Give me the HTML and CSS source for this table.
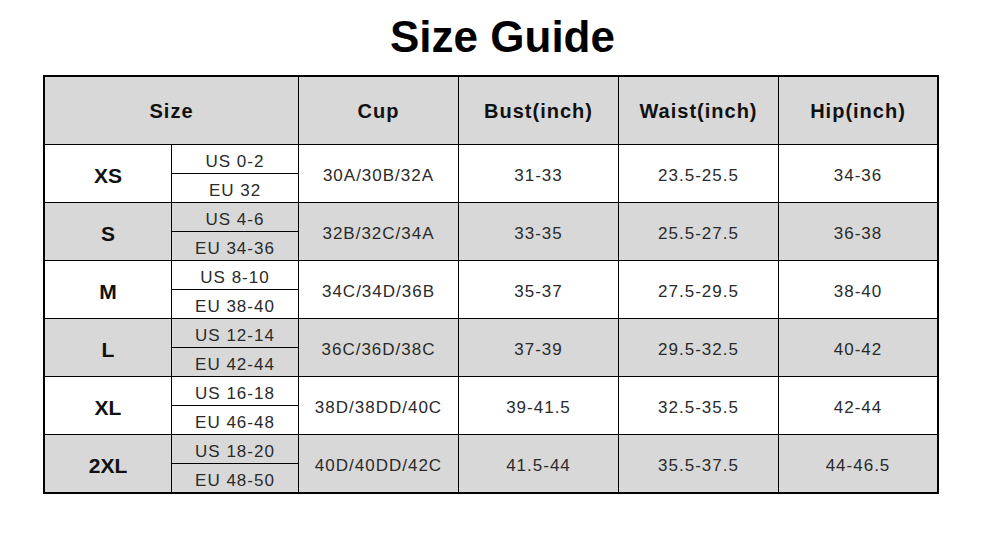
FILE: index.html
```html
<!DOCTYPE html>
<html>
<head>
<meta charset="utf-8">
<link rel="stylesheet" href="styles.css">
</head>
<body>
<div class="page">
  <h1 class="title">Size Guide</h1>
  <div class="frame">
    <div class="grid">
      <div class="cell head span-size">Size</div>
      <div class="cell head">Cup</div>
      <div class="cell head">Bust(inch)</div>
      <div class="cell head">Waist(inch)</div>
      <div class="cell head">Hip(inch)</div>

      <div class="cell size r2">XS</div>
      <div class="cell sub">US 0-2</div>
      <div class="cell data r2">30A/30B/32A</div>
      <div class="cell data r2">31-33</div>
      <div class="cell data r2">23.5-25.5</div>
      <div class="cell data r2">34-36</div>
      <div class="cell sub">EU 32</div>

      <div class="cell size r2 gray">S</div>
      <div class="cell sub gray">US 4-6</div>
      <div class="cell data r2 gray">32B/32C/34A</div>
      <div class="cell data r2 gray">33-35</div>
      <div class="cell data r2 gray">25.5-27.5</div>
      <div class="cell data r2 gray">36-38</div>
      <div class="cell sub gray">EU 34-36</div>

      <div class="cell size r2">M</div>
      <div class="cell sub">US 8-10</div>
      <div class="cell data r2">34C/34D/36B</div>
      <div class="cell data r2">35-37</div>
      <div class="cell data r2">27.5-29.5</div>
      <div class="cell data r2">38-40</div>
      <div class="cell sub">EU 38-40</div>

      <div class="cell size r2 gray">L</div>
      <div class="cell sub gray">US 12-14</div>
      <div class="cell data r2 gray">36C/36D/38C</div>
      <div class="cell data r2 gray">37-39</div>
      <div class="cell data r2 gray">29.5-32.5</div>
      <div class="cell data r2 gray">40-42</div>
      <div class="cell sub gray">EU 42-44</div>

      <div class="cell size r2">XL</div>
      <div class="cell sub">US 16-18</div>
      <div class="cell data r2">38D/38DD/40C</div>
      <div class="cell data r2">39-41.5</div>
      <div class="cell data r2">32.5-35.5</div>
      <div class="cell data r2">42-44</div>
      <div class="cell sub">EU 46-48</div>

      <div class="cell size r2 gray">2XL</div>
      <div class="cell sub gray">US 18-20</div>
      <div class="cell data r2 gray">40D/40DD/42C</div>
      <div class="cell data r2 gray">41.5-44</div>
      <div class="cell data r2 gray">35.5-37.5</div>
      <div class="cell data r2 gray">44-46.5</div>
      <div class="cell sub gray">EU 48-50</div>
    </div>
  </div>
</div>
</body>
</html>
```
FILE: styles.css
```css
html, body {
  margin: 0;
  padding: 0;
  background: #ffffff;
}
body {
  font-family: "Liberation Sans", Arial, sans-serif;
  color: #111;
}
.page {
  width: 1000px;
  height: 550px;
  padding-top: 12px;
  box-sizing: border-box;
}
.title {
  margin: 0 0 13px 0;
  padding-left: 5px;
  text-align: center;
  font-size: 44px;
  line-height: 50px;
  font-weight: bold;
  color: #000;
}
.frame {
  margin-left: 43px;
  width: 896px;
  border: 2px solid #000;
  box-sizing: border-box;
  background: #000;
}
.grid {
  display: grid;
  grid-template-columns: 126px 126px 159px 159px 159px 158px;
  grid-template-rows: 67px repeat(12, 28px);
  gap: 1px;
  background: #000;
}
.cell {
  background: #fff;
  display: flex;
  align-items: center;
  justify-content: center;
  white-space: nowrap;
}
.gray {
  background: #d8d8d8;
}
.head {
  background: #d8d8d8;
  font-size: 20px;
  font-weight: bold;
  letter-spacing: 1px;
  padding-top: 2px;
}
.span-size {
  grid-column: span 2;
}
.r2 {
  grid-row: span 2;
}
.size {
  font-size: 21px;
  font-weight: bold;
  padding-top: 5px;
}
.data, .sub {
  font-size: 17px;
  letter-spacing: 1px;
  color: #2a2a2a;
  padding-top: 4px;
}
.sub {
  padding-top: 5px;
}
```
